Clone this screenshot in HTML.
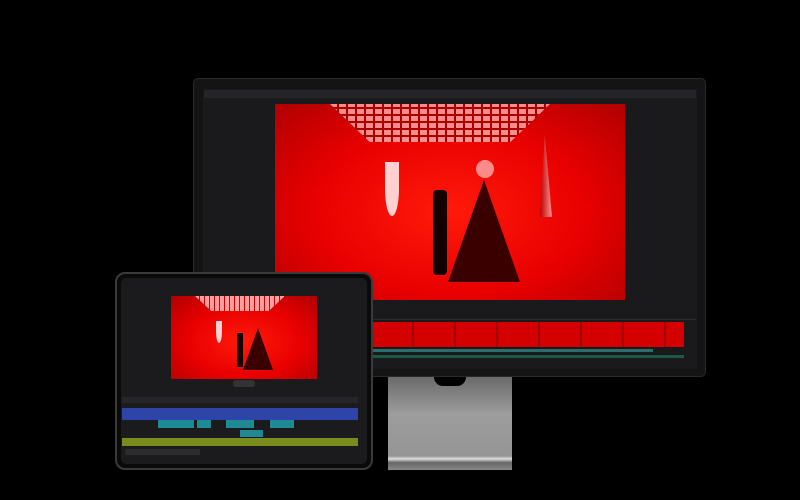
<!DOCTYPE html>
<html><head><style>
body{margin:0;width:800px;height:500px;background:#000;position:relative;overflow:hidden;font-family:"Liberation Sans",sans-serif}
div{position:absolute;box-sizing:border-box}
.red{background:radial-gradient(ellipse at 50% 55%,#ff1a0a 0%,#e80000 55%,#b00000 100%)}
</style></head><body>
<!-- monitor -->
<div style="left:193px;top:78px;width:513px;height:299px;background:#141415;border-radius:5px;border:1px solid #2a2a2a"></div>
<div style="left:203px;top:89px;width:494px;height:280px;background:#1a1a1c"></div>
<div style="left:204px;top:90px;width:492px;height:8px;background:#252527"></div>
<div class="red" style="left:275px;top:104px;width:350px;height:196px"></div>
<!-- ceiling grid -->
<div style="left:330px;top:104px;width:220px;height:38px;clip-path:polygon(0 0,100% 0,82% 100%,18% 100%);background:repeating-linear-gradient(90deg,#ff9c9c 0 7px,#a00000 7px 9px),#f99;opacity:.9"></div>
<div style="left:330px;top:104px;width:220px;height:38px;clip-path:polygon(0 0,100% 0,82% 100%,18% 100%);background:repeating-linear-gradient(0deg,transparent 0 5px,#a00 5px 7px)"></div>
<div style="left:385px;top:162px;width:14px;height:54px;background:#ffd0d0;border-radius:0 0 50% 50%"></div>
<div style="left:540px;top:135px;width:12px;height:82px;background:linear-gradient(90deg,#b00,#ff9090);clip-path:polygon(40% 0,100% 100%,0 100%)"></div>
<div style="left:476px;top:160px;width:18px;height:18px;border-radius:50%;background:#ff8a8a"></div>
<div style="left:448px;top:180px;width:72px;height:102px;background:#3a0000;clip-path:polygon(50% 0,100% 100%,0 100%)"></div>
<div style="left:433px;top:190px;width:14px;height:85px;background:#150000;border-radius:4px"></div>
<div style="left:204px;top:300px;width:492px;height:20px;background:#1a1a1c;border-bottom:1px solid #2e2e2e"></div>
<div style="left:372px;top:322px;width:312px;height:25px;background:repeating-linear-gradient(90deg,#d40000 0 40px,#a30000 40px 42px)"></div>
<div style="left:372px;top:349px;width:190px;height:3px;background:#2a6d6d"></div>
<div style="left:515px;top:349px;width:138px;height:3px;background:#2a6d6d"></div>
<div style="left:372px;top:355px;width:312px;height:3px;background:#1c5a45"></div>
<!-- stand -->
<div style="left:388px;top:377px;width:124px;height:93px;background:linear-gradient(180deg,#6a6a6a,#9d9d9d 40%,#959595 85%,#ddd 88%,#666 92%,#888)"></div>
<div style="left:434px;top:377px;width:32px;height:9px;border-radius:0 0 16px 16px;background:#000"></div>
<!-- ipad -->
<div style="left:115px;top:272px;width:258px;height:198px;background:#0a0a0a;border:2px solid #3a3a3a;border-radius:10px"></div>
<div style="left:121px;top:278px;width:246px;height:186px;background:#1b1b1d;border-radius:5px"></div>
<div class="red" style="left:171px;top:296px;width:146px;height:83px"></div>
<div style="left:195px;top:296px;width:90px;height:15px;clip-path:polygon(0 0,100% 0,82% 100%,18% 100%);background:repeating-linear-gradient(90deg,#ff9c9c 0 4px,#c00 4px 5px)"></div>
<div style="left:216px;top:321px;width:6px;height:22px;background:#ffd0d0;border-radius:0 0 50% 50%"></div>
<div style="left:243px;top:328px;width:30px;height:42px;background:#3a0000;clip-path:polygon(50% 0,100% 100%,0 100%)"></div>
<div style="left:237px;top:333px;width:6px;height:34px;background:#150000"></div>
<div style="left:233px;top:380px;width:22px;height:7px;background:#333;border-radius:3px"></div>
<div style="left:122px;top:397px;width:236px;height:6px;background:#262628"></div>
<div style="left:122px;top:408px;width:236px;height:12px;background:#2d44a8"></div>
<div style="left:158px;top:420px;width:36px;height:8px;background:#1d8a94"></div>
<div style="left:197px;top:420px;width:14px;height:8px;background:#1d8a94"></div>
<div style="left:226px;top:420px;width:28px;height:8px;background:#1d8a94"></div>
<div style="left:270px;top:420px;width:24px;height:8px;background:#1d8a94"></div>
<div style="left:240px;top:430px;width:23px;height:7px;background:#1d8a94"></div>
<div style="left:122px;top:438px;width:236px;height:8px;background:#7a8c1e"></div>
<div style="left:125px;top:449px;width:75px;height:6px;background:#2c2c2e"></div>
</body></html>
